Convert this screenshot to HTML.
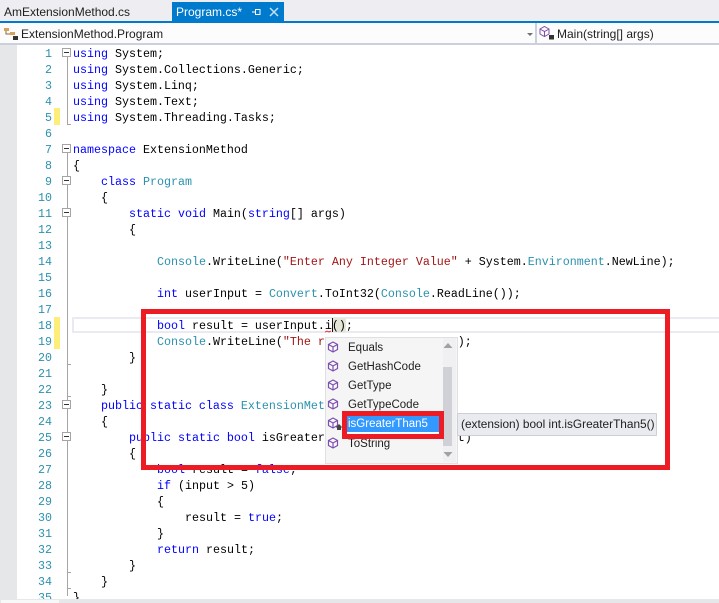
<!DOCTYPE html>
<html><head><meta charset="utf-8"><style>
html,body{margin:0;padding:0;background:#fff}
#r{position:relative;width:719px;height:603px;overflow:hidden;background:#fff}
.a{position:absolute}
.ui{font-family:"Liberation Sans",sans-serif;font-size:12px;color:#1e1e1e;white-space:pre}
.n,.c{position:absolute;font:11.67px/16px "Liberation Mono",monospace;white-space:pre;height:16px;margin-top:1px}
.n{left:20px;width:32px;text-align:right;color:#2b91af}
.c{color:#000}
i{font-style:normal}.k{color:#0000ff}.t{color:#2b91af}.s{color:#a31515}
.m{position:absolute;left:62px;width:7px;height:7px;border:1px solid #a5a5a5;background:#fff}
.m:after{content:"";position:absolute;left:1px;top:3px;width:5px;height:1px;background:#333}
.it{position:absolute;left:348px;font:11.5px/16px "Liberation Sans",sans-serif;color:#1e1e1e;white-space:pre}
</style></head><body><div id="r">
<div class="a" style="left:0;top:0;width:719px;height:21px;background:#eeeef2"></div>
<div class="a ui" style="left:4px;top:5px;font-size:12px">AmExtensionMethod.cs</div>
<div class="a" style="left:172px;top:2px;width:112px;height:19px;background:#007acc"></div>
<div class="a ui" style="left:176px;top:5px;color:#fff">Program.cs*</div>
<svg class="a" style="left:249px;top:6px" width="32" height="12"><path d="M3 6h3M6.500 3v6M7 3.500h4M7 8.500h4M11 3v6" stroke="#fff" fill="none"/><path d="M21 2l8 8M29 2l-8 8" stroke="#c4e0f4" stroke-width="1.500" fill="none"/></svg>
<div class="a" style="left:0;top:21px;width:719px;height:2px;background:#007acc"></div>
<div class="a" style="left:0;top:23px;width:719px;height:20px;background:#fcfcfc"></div>
<div class="a" style="left:0;top:43px;width:719px;height:2px;background:#ccd0de"></div>
<div class="a" style="left:535px;top:23px;width:2px;height:20px;background:#ccd0de"></div>
<svg class="a" style="left:3px;top:26px" width="17" height="16"><path d="M1 2h5v3H1zM7 6h5v3H7z" fill="#d9a05a"/><path d="M3 5v3h4" stroke="#8a6a3a" fill="none"/><rect x="10" y="10" width="5" height="4" fill="#333"/></svg>
<div class="a ui" style="left:21px;top:27px">ExtensionMethod.Program</div>
<svg class="a" style="left:526px;top:32px" width="8" height="5"><path d="M1 1h6L4 4z" fill="#717171"/></svg>
<svg class="a" style="left:539px;top:25px" width="17" height="16"><path d="M5.500 1.500l4.500 2.500v5L5.500 11.500 1 9V4zM1 4l4.500 2.500L10 4M5.500 6.500v5" fill="none" stroke="#7d4fb0" stroke-width="1"/><rect x="10" y="10" width="5" height="4.500" fill="#333"/></svg>
<div class="a ui" style="left:557px;top:27px">Main(string[] args)</div>
<div class="a" style="left:0;top:45px;width:17px;height:558px;background:#e6e7e8"></div>
<div class="a" style="left:54px;top:108px;width:6px;height:17px;background:#fdee7a"></div>
<div class="a" style="left:54px;top:317px;width:6px;height:32px;background:#fdee7a"></div>
<svg class="a" style="left:60px;top:45px" width="14" height="558"><path d="M7.500 5V79.500H11M7.500 100V551M7.500 319.500H11M7.500 351.500H11M7.500 527.500H11M7.500 543.500H11" fill="none" stroke="#a5a5a5"/></svg>
<div class="m" style="top:48px"></div><div class="m" style="top:144px"></div><div class="m" style="top:176px"></div><div class="m" style="top:208px"></div><div class="m" style="top:400px"></div><div class="m" style="top:432px"></div>
<div class="n" style="top:45px">1</div><div class="n" style="top:61px">2</div><div class="n" style="top:77px">3</div><div class="n" style="top:93px">4</div><div class="n" style="top:109px">5</div><div class="n" style="top:125px">6</div><div class="n" style="top:141px">7</div><div class="n" style="top:157px">8</div><div class="n" style="top:173px">9</div><div class="n" style="top:189px">10</div><div class="n" style="top:205px">11</div><div class="n" style="top:221px">12</div><div class="n" style="top:237px">13</div><div class="n" style="top:253px">14</div><div class="n" style="top:269px">15</div><div class="n" style="top:285px">16</div><div class="n" style="top:301px">17</div><div class="n" style="top:317px">18</div><div class="n" style="top:333px">19</div><div class="n" style="top:349px">20</div><div class="n" style="top:365px">21</div><div class="n" style="top:381px">22</div><div class="n" style="top:397px">23</div><div class="n" style="top:413px">24</div><div class="n" style="top:429px">25</div><div class="n" style="top:445px">26</div><div class="n" style="top:461px">27</div><div class="n" style="top:477px">28</div><div class="n" style="top:493px">29</div><div class="n" style="top:509px">30</div><div class="n" style="top:525px">31</div><div class="n" style="top:541px">32</div><div class="n" style="top:557px">33</div><div class="n" style="top:573px">34</div><div class="n" style="top:589px">35</div>
<div class="a" style="left:72px;top:317px;width:647px;height:12px;border:2px solid #eaeaf2;border-right:0"></div>
<div class="c" style="left:73px;top:45px"><i class="k">using</i> System;</div>
<div class="c" style="left:73px;top:61px"><i class="k">using</i> System.Collections.Generic;</div>
<div class="c" style="left:73px;top:77px"><i class="k">using</i> System.Linq;</div>
<div class="c" style="left:73px;top:93px"><i class="k">using</i> System.Text;</div>
<div class="c" style="left:73px;top:109px"><i class="k">using</i> System.Threading.Tasks;</div>
<div class="c" style="left:73px;top:141px"><i class="k">namespace</i> ExtensionMethod</div>
<div class="c" style="left:73px;top:157px">{</div>
<div class="c" style="left:101px;top:173px"><i class="k">class</i> <i class="t">Program</i></div>
<div class="c" style="left:101px;top:189px">{</div>
<div class="c" style="left:129px;top:205px"><i class="k">static void</i> Main(<i class="k">string</i>[] args)</div>
<div class="c" style="left:129px;top:221px">{</div>
<div class="c" style="left:157px;top:253px"><i class="t">Console</i>.WriteLine(<i class="s">"Enter Any Integer Value"</i> + System.<i class="t">Environment</i>.NewLine);</div>
<div class="c" style="left:157px;top:285px"><i class="k">int</i> userInput = <i class="t">Convert</i>.ToInt32(<i class="t">Console</i>.ReadLine());</div>
<div class="a" style="left:332px;top:318px;width:14px;height:14px;background:#e4e6d8"></div>
<div class="c" style="left:157px;top:317px"><i class="k">bool</i> result = userInput.i();</div>
<div class="a" style="left:332px;top:318px;width:1px;height:14px;background:#111"></div>
<svg class="a" style="left:325px;top:330px" width="7" height="3"><path d="M0 2l2-1 2 1 2-1" stroke="#e33" fill="none"/></svg>
<div class="c" style="left:157px;top:333px"><i class="t">Console</i>.WriteLine(<i class="s">"The result is : "</i>+result);</div>
<div class="c" style="left:129px;top:349px">}</div>
<div class="c" style="left:101px;top:381px">}</div>
<div class="c" style="left:101px;top:397px"><i class="k">public static class</i> <i class="t">ExtensionMethods</i></div>
<div class="c" style="left:101px;top:413px">{</div>
<div class="c" style="left:129px;top:429px"><i class="k">public static bool</i> isGreaterThan5(<i class="k">this int</i> input)</div>
<div class="c" style="left:129px;top:445px">{</div>
<div class="c" style="left:157px;top:461px"><i class="k">bool</i> result = <i class="k">false</i>;</div>
<div class="c" style="left:157px;top:477px"><i class="k">if</i> (input &gt; 5)</div>
<div class="c" style="left:157px;top:493px">{</div>
<div class="c" style="left:185px;top:509px">result = <i class="k">true</i>;</div>
<div class="c" style="left:157px;top:525px">}</div>
<div class="c" style="left:157px;top:541px"><i class="k">return</i> result;</div>
<div class="c" style="left:129px;top:557px">}</div>
<div class="c" style="left:101px;top:573px">}</div>
<div class="c" style="left:73px;top:589px">}</div>
<div class="a" style="left:0;top:599px;width:719px;height:4px;background:#e6e7e8"></div>
<div class="a" style="left:1px;top:600px;width:58px;height:3px;background:#f8f8f8"></div>
<div class="a" style="left:141px;top:309px;width:519px;height:151px;border:5px solid #ed1c24"></div>
<div class="a" style="left:325px;top:333px;width:133px;height:4px;background:#fff"></div>
<div class="a" style="left:325px;top:337px;width:131px;height:125px;background:#f5f5f5;border:1px solid #e0e0e4"></div>
<div class="a" style="left:443px;top:338px;width:13px;height:124px;background:#f0f0f2"></div>
<div class="a" style="left:443px;top:367px;width:9px;height:79px;background:#d0d1d7"></div>
<svg class="a" style="left:442px;top:342px" width="12" height="116"><path d="M1.500 6L6 1l4.500 5zM1.500 110h9L6 115z" fill="#a0a0a6"/></svg>
<svg class="a" style="left:327px;top:341px" width="13" height="112"><defs><path id="q" d="M6 1l4.500 2.500v5L6 11 1.500 8.500v-5zM1.500 3.500L6 6l4.500-2.500M6 6v5" fill="#fafafa" stroke="#7d4fb0" stroke-width="1.200"/></defs><use href="#q"/><use href="#q" y="19"/><use href="#q" y="38"/><use href="#q" y="57"/><use href="#q" y="76"/><use href="#q" y="96"/></svg>
<svg class="a" style="left:335px;top:423px" width="9" height="9"><path d="M4 1l3 3-1 1v2H2V5L1 4z" fill="#444"/></svg>
<div class="it" style="top:340px">Equals</div>
<div class="it" style="top:359px">GetHashCode</div>
<div class="it" style="top:378px">GetType</div>
<div class="it" style="top:397px">GetTypeCode</div>
<div class="it" style="top:436px">ToString</div>
<div class="a" style="left:342px;top:411px;width:92px;height:18px;border:5px solid #ed1c24;background:#fff"></div>
<div class="a" style="left:347px;top:416px;width:92px;height:16px;background:#3399ff"></div>
<div class="it" style="top:416px;color:#fff">isGreaterThan5</div>
<div class="a" style="left:457px;top:413px;width:198px;height:21px;background:#e9ebf0;border:1px solid #ccced8;border-radius:1px"></div>
<div class="a ui" style="left:461px;top:417px;font-size:11.85px">(extension) bool int.isGreaterThan5()</div>
</div></body></html>
